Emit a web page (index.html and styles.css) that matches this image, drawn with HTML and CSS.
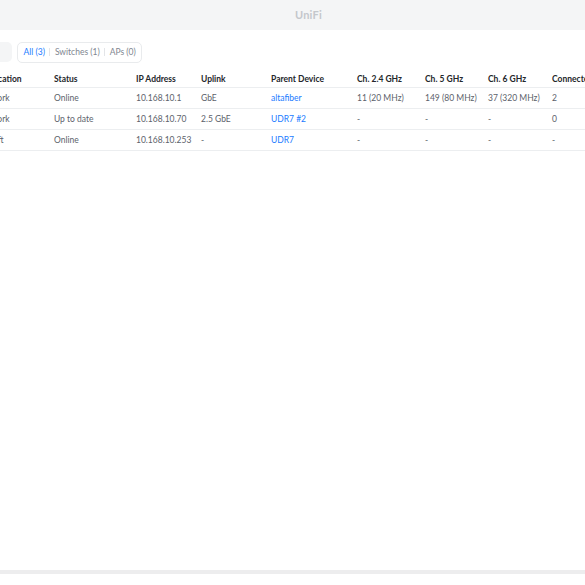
FILE: index.html
```html
<!DOCTYPE html>
<html lang="en">
<head>
    <meta charset="UTF-8">
    <meta name="viewport" content="width=device-width, initial-scale=1.0">
    <title>UniFi Devices</title>
    <link rel="stylesheet" href="styles.css">
</head>
<body>
    <div class="topbar">
        <span class="brand">UniFi</span>
    </div>

    <div class="content">
        <div class="toolbar">
            <div class="search-box"></div>
            <div class="tabs">
                <span class="tab active">All (3)</span>
                <span class="tab-sep"></span>
                <span class="tab">Switches (1)</span>
                <span class="tab-sep"></span>
                <span class="tab">APs (0)</span>
            </div>
        </div>

        <div class="table-wrap">
            <table class="device-table">
                <colgroup>
                    <col class="c-location">
                    <col class="c-status">
                    <col class="c-ip">
                    <col class="c-uplink">
                    <col class="c-parent">
                    <col class="c-ch24">
                    <col class="c-ch5">
                    <col class="c-ch6">
                    <col class="c-conn">
                </colgroup>
                <thead>
                    <tr>
                        <th>Location</th>
                        <th>Status</th>
                        <th>IP Address</th>
                        <th>Uplink</th>
                        <th>Parent Device</th>
                        <th>Ch. 2.4 GHz</th>
                        <th>Ch. 5 GHz</th>
                        <th>Ch. 6 GHz</th>
                        <th>Connected</th>
                    </tr>
                </thead>
                <tbody>
                    <tr>
                        <td>Work</td>
                        <td>Online</td>
                        <td>10.168.10.1</td>
                        <td>GbE</td>
                        <td><a class="link">altafiber</a></td>
                        <td>11 (20 MHz)</td>
                        <td>149 (80 MHz)</td>
                        <td>37 (320 MHz)</td>
                        <td>2</td>
                    </tr>
                    <tr>
                        <td>Work</td>
                        <td>Up to date</td>
                        <td>10.168.10.70</td>
                        <td>2.5 GbE</td>
                        <td><a class="link">UDR7 #2</a></td>
                        <td>-</td>
                        <td>-</td>
                        <td>-</td>
                        <td>0</td>
                    </tr>
                    <tr>
                        <td>Loft</td>
                        <td>Online</td>
                        <td>10.168.10.253</td>
                        <td>-</td>
                        <td><a class="link">UDR7</a></td>
                        <td>-</td>
                        <td>-</td>
                        <td>-</td>
                        <td>-</td>
                    </tr>
                </tbody>
            </table>
        </div>
    </div>

    <div class="scrollbar"></div>
</body>
</html>
```

FILE: styles.css
```css
html, body {
    height: 100%;
}
body {
    margin: 0;
    font-family: Lato, "Noto Sans", sans-serif;
    background: #fff;
    display: flex;
    flex-direction: column;
    overflow: hidden;
}
.topbar {
    height: 30px;
    flex: 0 0 30px;
    box-sizing: border-box;
    background: #f4f5f6;
    display: flex;
    align-items: center;
    justify-content: center;
    padding-left: 32px;
    padding-bottom: 2px;
}
.brand {
    font-size: 11px;
    font-weight: 700;
    color: #c4c7cc;
    letter-spacing: 0.2px;
}
.content {
    flex: 1;
    overflow: hidden;
}
.toolbar {
    display: flex;
    align-items: center;
    gap: 5px;
    margin-top: 12px;
    margin-left: -88px;
    height: 20px;
}
.search-box {
    width: 100px;
    height: 20px;
    background: #f4f5f6;
    border-radius: 5px;
}
.tabs {
    display: flex;
    align-items: center;
    height: 19px;
    border: 1px solid #e9ebed;
    border-radius: 5px;
    padding: 0 1px;
    font-size: 8.5px;
}
.tab {
    color: #808690;
    padding: 0 4.5px;
}
.tab.active {
    color: #1a7bff;
}
.tab-sep {
    width: 1px;
    height: 8px;
    background: #e3e5e8;
}
.table-wrap {
    margin-top: 9px;
    margin-left: -11px;
}
.device-table {
    border-collapse: collapse;
    table-layout: fixed;
    width: 650px;
    font-size: 8.5px;
}
.c-location { width: 65px; }
.c-status { width: 82px; }
.c-ip { width: 65px; }
.c-uplink { width: 70px; }
.c-parent { width: 86px; }
.c-ch24 { width: 68px; }
.c-ch5 { width: 63px; }
.c-ch6 { width: 64px; }
.c-conn { width: 87px; }
.device-table th {
    text-align: left;
    font-weight: 700;
    color: #24272b;
    height: 16px;
    padding: 0;
    border-bottom: 1px solid #eceef0;
    white-space: nowrap;
}
.device-table td {
    color: #5c626b;
    height: 20px;
    padding: 0;
    border-bottom: 1px solid #eceef0;
    white-space: nowrap;
}
.link {
    color: #1a7bff;
    text-decoration: none;
}
.scrollbar {
    flex: 0 0 4px;
    background: #ededee;
    margin-bottom: 11px;
}
```
